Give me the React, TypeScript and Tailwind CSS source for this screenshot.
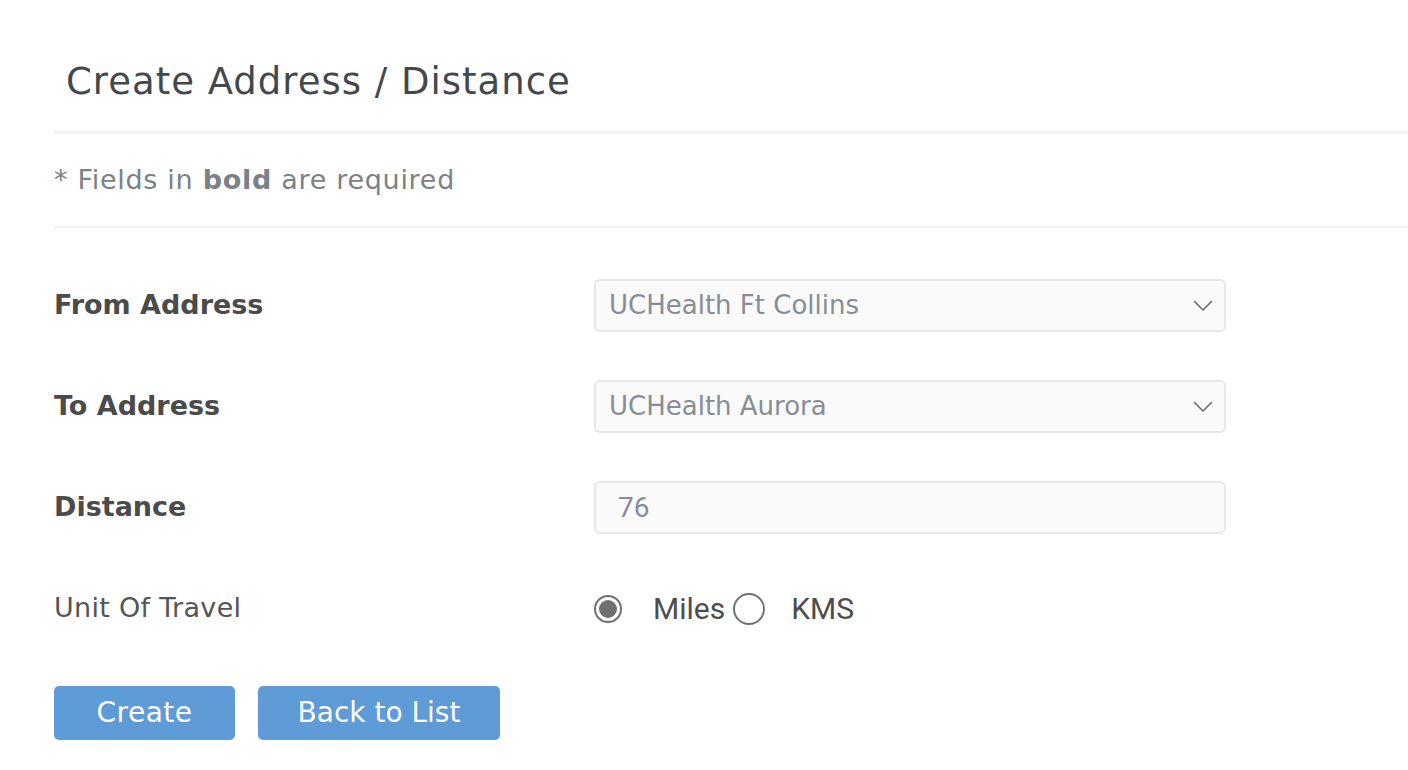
import React from "react";

const font = { fontFamily: '"DejaVu Sans", "Noto Sans", sans-serif' };

function Chevron() {
  return (
    <svg width="20" height="12" viewBox="0 0 20 12" fill="none" className="shrink-0">
      <path d="M1.5 1.5 L10 10 L18.5 1.5" stroke="#646a70" strokeWidth="1.5" strokeLinecap="round" strokeLinejoin="round" />
    </svg>
  );
}

function SelectBox({ value }: { value: string }) {
  return (
    <div className="flex h-[53px] w-[632px] items-center justify-between rounded-[6px] border-2 border-[#e8e8e8] bg-[#fafafa] pl-[13px] pr-[11px]">
      <span className="text-[26px] text-[#878d94]">{value}</span>
      <Chevron />
    </div>
  );
}

function Row({ label, bold, children }: { label: string; bold?: boolean; children: React.ReactNode }) {
  return (
    <div className="flex h-[53px] items-center">
      <div
        className={`w-[540px] text-[27px] ${bold ? "font-bold text-[#4b4b4b]" : "tracking-[0.3px] text-[#555555]"}`}
      >
        {label}
      </div>
      {children}
    </div>
  );
}

export default function App() {
  return (
    <div className="min-h-[770px] w-[1408px] bg-white" style={font}>
      <div className="pl-[54px]">
        <div className="flex h-[131px] items-center pl-[12px] pt-[32px]">
          <h1 className="text-[37px] font-normal tracking-[1px] text-[#43484d]">Create Address / Distance</h1>
        </div>
        <div className="h-[3px] bg-[#f2f2f2]" />
        <div className="flex h-[92px] items-center text-[27px] tracking-[0.7px] text-[#7a8187]">
          <span>
            * Fields in <span className="font-bold">bold</span> are required
          </span>
        </div>
        <div className="h-[2px] bg-[#f2f2f2]" />
        <div className="mt-[51px] flex flex-col gap-[48px]">
          <Row label="From Address" bold>
            <SelectBox value="UCHealth Ft Collins" />
          </Row>
          <Row label="To Address" bold>
            <SelectBox value="UCHealth Aurora" />
          </Row>
          <Row label="Distance" bold>
            <div className="flex h-[53px] w-[632px] items-center rounded-[6px] border-2 border-[#e8e8e8] bg-[#fafafa] pl-[22px]">
              <span className="text-[28px] text-[#878d94]" style={{ fontFamily: "Roboto, sans-serif" }}>76</span>
            </div>
          </Row>
          <Row label="Unit Of Travel">
            <div className="flex items-center" style={{ fontFamily: "Roboto, sans-serif" }}>
              <span className="flex h-[28px] w-[28px] items-center justify-center rounded-full border-2 border-[#707070]">
                <span className="h-[18px] w-[18px] rounded-full bg-[#707070]" />
              </span>
              <span className="ml-[31px] text-[30px] text-[#4d4d4d]">Miles</span>
              <span className="ml-[8px] h-[32px] w-[32px] rounded-full border-2 border-[#707070]" />
              <span className="ml-[26px] text-[30px] text-[#4d4d4d]">KMS</span>
            </div>
          </Row>
        </div>
        <div className="mt-[51px] flex gap-[23px]">
          <button className="h-[54px] w-[181px] rounded-[5px] bg-[#5f9bd6] text-[28px] tracking-[0.5px] text-white">Create</button>
          <button className="h-[54px] w-[242px] rounded-[5px] bg-[#5f9bd6] text-[28px] text-white">Back to List</button>
        </div>
      </div>
    </div>
  );
}
